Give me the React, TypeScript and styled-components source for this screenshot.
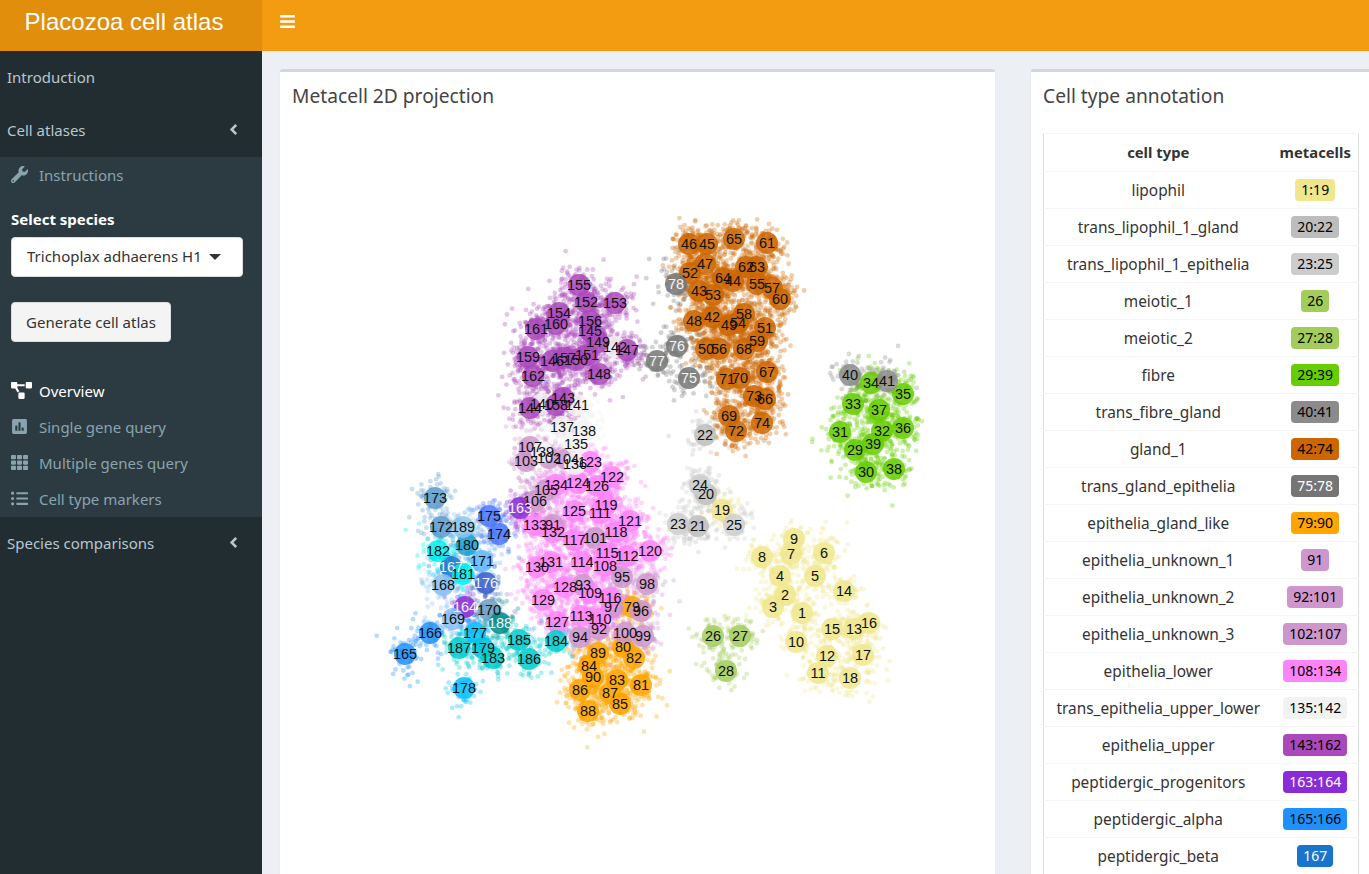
import React, { useMemo } from 'react';
import styled, { createGlobalStyle } from 'styled-components';
import {
  FaAngleLeft,
  FaBars,
  FaListUl,
  FaPoll,
  FaProjectDiagram,
  FaTh,
  FaWrench,
} from 'react-icons/fa';

const UI_FONT = '"Noto Sans", "Open Sans", sans-serif';

const GlobalStyle = createGlobalStyle`
  html, body {
    margin: 0;
    height: 100%;
    overflow: hidden;
    background: #ecf0f5;
    font-family: ${UI_FONT};
    font-size: 15px;
    color: #333;
  }
  * {
    box-sizing: border-box;
  }
`;

const Page = styled.div`
  width: 1369px;
  height: 874px;
  overflow: hidden;
`;

const Header = styled.header`
  display: flex;
  height: 51px;
  background: #f39c12;
`;

const Logo = styled.div`
  width: 262px;
  background: #e08e0b;
  color: #fff;
  font-family: 'Liberation Sans', Arial, sans-serif;
  font-size: 24px;
  line-height: 43px;
  text-align: center;
  padding-right: 14px;
`;

const MenuToggle = styled.div`
  display: flex;
  padding: 13px 0 0 17px;
  color: #fff;
  font-size: 17px;
`;

const Body = styled.div`
  display: flex;
  height: 823px;
`;

const Sidebar = styled.nav`
  flex: 0 0 262px;
  background: #222d32;
  color: #b8c7ce;
`;

const TopItem = styled.div`
  display: flex;
  align-items: center;
  justify-content: space-between;
  height: 53px;
  padding: 0 20px 2px 7px;
  font-size: 15px;

  svg {
    font-size: 17px;
  }
`;

const SubMenu = styled.div`
  background: #2c3b41;
  height: 360px;
  padding-top: 1px;
`;

const SubItem = styled.div<{ $active?: boolean }>`
  display: flex;
  align-items: center;
  height: 36px;
  padding: 0 0 3px 11px;
  color: ${props => (props.$active ? '#fff' : '#8aa4af')};
`;

const SubIcon = styled.span`
  display: flex;
  width: 28px;
  font-size: 17px;
`;

const Field = styled.div`
  padding: 13px 11px 0;
`;

const FieldLabel = styled.div`
  color: #fff;
  font-weight: 700;
  line-height: 24px;
  margin-bottom: 6px;
`;

const SelectBox = styled.div`
  position: relative;
  height: 40px;
  width: 232px;
  padding-left: 15px;
  line-height: 37px;
  color: #333;
  background: #fff;
  border: 1px solid #ddd;
  border-radius: 4px;

  &::after {
    content: '';
    position: absolute;
    right: 21px;
    top: 16px;
    border-left: 6px solid transparent;
    border-right: 6px solid transparent;
    border-top: 6px solid #333;
  }
`;

const GenerateButton = styled.div`
  width: 160px;
  height: 40px;
  margin: 25px 0 32px 11px;
  text-align: center;
  line-height: 38px;
  color: #333;
  background: #f4f4f4;
  border: 1px solid #ddd;
  border-radius: 4px;
`;

const Content = styled.main`
  flex: 1;
  display: flex;
  gap: 36px;
  padding: 18px 0 0 18px;
  overflow: hidden;
`;

const Box = styled.section<{ $width: number }>`
  flex: 0 0 ${props => props.$width}px;
  height: 900px;
  background: #fff;
  border-top: 3px solid #d2d6de;
  border-radius: 3px;
  box-shadow: 0 1px 1px rgba(0, 0, 0, 0.1);
`;

const BoxTitle = styled.h3`
  margin: 0;
  padding: 12px 12px 0;
  height: 40px;
  font-size: 19.2px;
  font-weight: 400;
  line-height: 24px;
  color: #444;
`;

const Plot = styled.svg`
  display: block;
`;

const TableWrap = styled.div`
  padding: 21px 0 0 12px;
`;

const Table = styled.table`
  width: 316px;
  table-layout: fixed;
  border-collapse: collapse;
  border: 1px solid #ddd;
  text-align: center;
  font-size: 15.4px;

  th,
  td {
    height: 37px;
    padding: 0;
    border-top: 1px solid #f4f4f4;
  }

  th {
    height: 38px;
    padding-bottom: 2px;
    font-size: 14.8px;
  }

  th:first-child,
  td:first-child {
    width: 229px;
  }
`;

const Badge = styled.span<{ $bg: string; $light?: boolean }>`
  display: inline-block;
  height: 22px;
  padding: 0 6px;
  font-size: 14px;
  line-height: 22px;
  border-radius: 4px;
  background: ${props => props.$bg};
  color: ${props => (props.$light ? '#fff' : '#000')};
`;

const ANNOTATIONS: [string, string, string, boolean?][] = [
  ['lipophil', '1:19', '#f0e68c'],
  ['trans_lipophil_1_gland', '20:22', '#bdbdbd'],
  ['trans_lipophil_1_epithelia', '23:25', '#cccccc'],
  ['meiotic_1', '26', '#a2cd5a'],
  ['meiotic_2', '27:28', '#a2cd5a'],
  ['fibre', '29:39', '#66cd00'],
  ['trans_fibre_gland', '40:41', '#8b8b8b'],
  ['gland_1', '42:74', '#cd6600'],
  ['trans_gland_epithelia', '75:78', '#757575', true],
  ['epithelia_gland_like', '79:90', '#ffa500'],
  ['epithelia_unknown_1', '91', '#cd96cd'],
  ['epithelia_unknown_2', '92:101', '#cd96cd'],
  ['epithelia_unknown_3', '102:107', '#cd96cd'],
  ['epithelia_lower', '108:134', '#ff83fa'],
  ['trans_epithelia_upper_lower', '135:142', '#f2f2f2'],
  ['epithelia_upper', '143:162', '#aa49bb'],
  ['peptidergic_progenitors', '163:164', '#8a2bd8', true],
  ['peptidergic_alpha', '165:166', '#1e90ff'],
  ['peptidergic_beta', '167', '#1874cd', true],
];

// metacell id, x, y in page pixels
const NODES: [number, number, number][] = [
  [1, 802, 613], [2, 785, 595], [3, 773, 607], [4, 780, 576], [5, 815, 576], [6, 824, 553], [7, 791, 554],
  [8, 762, 557], [9, 794, 539], [10, 796, 642], [11, 818, 673], [12, 827, 656], [13, 854, 629], [14, 844, 591],
  [15, 832, 629], [16, 869, 623], [17, 863, 655], [18, 850, 678], [19, 722, 510], [20, 706, 494], [21, 698, 526],
  [22, 705, 435], [23, 678, 524], [24, 700, 485], [25, 734, 525], [26, 713, 636], [27, 740, 636], [28, 726, 671],
  [29, 855, 450], [30, 866, 472], [31, 840, 432], [32, 882, 431], [33, 853, 404], [34, 871, 383], [35, 903, 394],
  [36, 903, 428], [37, 879, 410], [38, 894, 469], [39, 873, 444], [40, 850, 375], [41, 887, 381], [42, 712, 317],
  [43, 699, 291], [44, 733, 281], [45, 707, 244], [46, 689, 244], [47, 705, 264], [48, 694, 321], [49, 729, 325],
  [50, 706, 349], [51, 765, 328], [52, 690, 273], [53, 713, 295], [54, 738, 323], [55, 757, 284], [56, 719, 349],
  [57, 772, 288], [58, 744, 314], [59, 757, 341], [60, 780, 299], [61, 767, 243], [62, 746, 267], [63, 757, 267],
  [64, 723, 278], [65, 734, 239], [66, 765, 399], [67, 767, 372], [68, 744, 349], [69, 729, 416], [70, 740, 378],
  [71, 727, 379], [72, 736, 431], [73, 754, 396], [74, 762, 423], [75, 689, 378], [76, 677, 346], [77, 657, 361],
  [78, 676, 284], [79, 632, 607], [80, 623, 647], [81, 641, 685], [82, 634, 658], [83, 617, 680], [84, 589, 666],
  [85, 620, 704], [86, 580, 690], [87, 610, 693], [88, 588, 711], [89, 598, 653], [90, 593, 677], [91, 553, 525],
  [92, 599, 629], [93, 583, 585], [94, 580, 637], [95, 622, 577], [96, 641, 611], [97, 612, 607], [98, 647, 584],
  [99, 643, 636], [100, 625, 633], [101, 595, 538], [102, 549, 458], [103, 526, 461], [104, 567, 459], [105, 546, 490],
  [106, 535, 501], [107, 530, 447], [108, 605, 566], [109, 590, 593], [110, 600, 619], [111, 600, 513], [112, 627, 556],
  [113, 581, 616], [114, 582, 562], [115, 607, 553], [116, 610, 598], [117, 574, 540], [118, 616, 532], [119, 606, 505],
  [120, 650, 551], [121, 630, 521], [122, 612, 477], [123, 590, 462], [124, 578, 483], [125, 574, 511], [126, 597, 486],
  [127, 557, 622], [128, 565, 587], [129, 543, 600], [130, 537, 567], [131, 551, 562], [132, 553, 532], [133, 535, 525],
  [134, 556, 485], [135, 576, 444], [136, 575, 464], [137, 562, 427], [138, 584, 431], [139, 542, 452], [140, 542, 404],
  [141, 577, 405], [142, 615, 347], [143, 563, 398], [144, 530, 408], [145, 590, 331], [146, 552, 361], [147, 627, 350],
  [148, 599, 374], [149, 598, 342], [150, 576, 360], [151, 587, 355], [152, 586, 302], [153, 615, 303], [154, 559, 313],
  [155, 579, 285], [156, 590, 321], [157, 564, 358], [158, 556, 405], [159, 528, 357], [160, 556, 324], [161, 536, 329],
  [162, 533, 376], [163, 520, 508], [164, 465, 607], [165, 405, 654], [166, 430, 633], [167, 451, 567], [168, 443, 585],
  [169, 453, 619], [170, 489, 610], [171, 482, 561], [172, 441, 527], [173, 435, 498], [174, 499, 534], [175, 489, 516],
  [176, 486, 583], [177, 475, 633], [178, 464, 688], [179, 483, 648], [180, 467, 545], [181, 463, 574], [182, 438, 551],
  [183, 493, 658], [184, 556, 641], [185, 519, 640], [186, 529, 659], [187, 459, 648], [188, 500, 623], [189, 463, 527],
];

const RANGES: [number, string][] = [
  [19, '#f0e68c'], [22, '#bdbdbd'], [25, '#cccccc'], [28, '#a2cd5a'], [39, '#66cd00'], [41, '#8b8b8b'],
  [74, '#cd6600'], [78, '#757575'], [90, '#ffa500'], [107, '#cd96cd'], [134, '#ff83fa'], [142, '#f2f2f2'],
  [162, '#aa49bb'], [164, '#8a2bd8'], [166, '#1e90ff'], [167, '#1874cd'], [169, '#87bef5'], [170, '#6c9dbf'],
  [171, '#63b8ff'], [173, '#5a9bcd'], [175, '#4876ff'], [176, '#3a5fcd'], [178, '#00bfff'], [179, '#00c4dc'],
  [180, '#1c9fcf'], [182, '#00eeee'], [187, '#00cdcd'], [188, '#008b8b'], [189, '#8ec5ec'],
];

const LIGHT_LABELS = new Set([75, 76, 77, 78, 163, 164, 167, 176, 188]);

const colorOf = (id: number) => RANGES.find(([end]) => id <= end)![1];

const makeRandom = (seed: number) => () => {
  seed = (seed + 0x6d2b79f5) | 0;
  let t = Math.imul(seed ^ (seed >>> 15), 1 | seed);
  t = (t + Math.imul(t ^ (t >>> 7), 61 | t)) ^ t;
  return ((t ^ (t >>> 14)) >>> 0) / 4294967296;
};

const dotCount = (id: number) => {
  if (id >= 42 && id <= 74) return 70;
  if (id >= 108 && id <= 134) return 75;
  if (id >= 143 && id <= 162) return 75;
  if (id >= 29 && id <= 39) return 60;
  if (id >= 79 && id <= 90) return 65;
  return 45;
};

const useDots = () =>
  useMemo(() => {
    const random = makeRandom(1789);
    const dots: { x: number; y: number; fill: string }[] = [];
    NODES.forEach(([id, x, y]) => {
      const fill = colorOf(id);
      const count = dotCount(id);
      for (let i = 0; i < count; i++) {
        // mostly a tight clump, a few strays further out
        const reach = i % 5 === 0 ? 40 : 24;
        const radius = reach * Math.sqrt(random()) * (0.55 + 0.45 * random());
        const angle = 2 * Math.PI * random();
        dots.push({ x: x + radius * Math.cos(angle), y: y + radius * Math.sin(angle), fill });
      }
    });
    return dots;
  }, []);

const MetacellPlot: React.FC = () => {
  const dots = useDots();
  return (
    <Plot width={715} height={760} viewBox="280 112 715 760">
      {dots.map((d, i) => (
        <circle key={i} cx={d.x} cy={d.y} r={2.4} fill={d.fill} fillOpacity={0.32} />
      ))}
      {NODES.map(([id, x, y]) => (
        <circle key={id} cx={x} cy={y} r={11} fill={colorOf(id)} fillOpacity={0.85} />
      ))}
      {NODES.map(([id, x, y]) => (
        <text
          key={id}
          x={x}
          y={y + 5}
          textAnchor="middle"
          fontFamily="'Liberation Sans', Arial, sans-serif"
          fontSize={14.5}
          fill={LIGHT_LABELS.has(id) ? '#f4f4f4' : '#111'}
        >
          {id}
        </text>
      ))}
    </Plot>
  );
};

const App: React.FC = () => (
  <Page>
    <GlobalStyle />
    <Header>
      <Logo>Placozoa cell atlas</Logo>
      <MenuToggle>
        <FaBars />
      </MenuToggle>
    </Header>
    <Body>
      <Sidebar>
        <TopItem>Introduction</TopItem>
        <TopItem>
          Cell atlases
          <FaAngleLeft />
        </TopItem>
        <SubMenu>
          <SubItem>
            <SubIcon>
              <FaWrench />
            </SubIcon>
            Instructions
          </SubItem>
          <Field>
            <FieldLabel>Select species</FieldLabel>
            <SelectBox>Trichoplax adhaerens H1</SelectBox>
          </Field>
          <GenerateButton>Generate cell atlas</GenerateButton>
          <SubItem $active>
            <SubIcon>
              <FaProjectDiagram size={21} />
            </SubIcon>
            Overview
          </SubItem>
          <SubItem>
            <SubIcon>
              <FaPoll />
            </SubIcon>
            Single gene query
          </SubItem>
          <SubItem>
            <SubIcon>
              <FaTh />
            </SubIcon>
            Multiple genes query
          </SubItem>
          <SubItem>
            <SubIcon>
              <FaListUl />
            </SubIcon>
            Cell type markers
          </SubItem>
        </SubMenu>
        <TopItem>
          Species comparisons
          <FaAngleLeft />
        </TopItem>
      </Sidebar>
      <Content>
        <Box $width={715}>
          <BoxTitle>Metacell 2D projection</BoxTitle>
          <MetacellPlot />
        </Box>
        <Box $width={340}>
          <BoxTitle>Cell type annotation</BoxTitle>
          <TableWrap>
            <Table>
              <thead>
                <tr>
                  <th>cell type</th>
                  <th>metacells</th>
                </tr>
              </thead>
              <tbody>
                {ANNOTATIONS.map(([name, range, bg, light]) => (
                  <tr key={name}>
                    <td>{name}</td>
                    <td>
                      <Badge $bg={bg} $light={light}>
                        {range}
                      </Badge>
                    </td>
                  </tr>
                ))}
              </tbody>
            </Table>
          </TableWrap>
        </Box>
      </Content>
    </Body>
  </Page>
);

export default App;
